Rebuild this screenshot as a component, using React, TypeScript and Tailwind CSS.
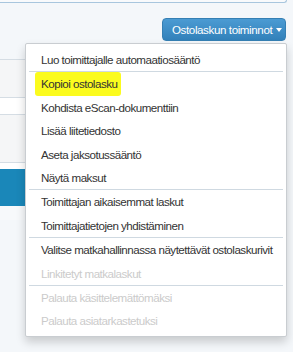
import React from "react";

type Item = { label: string; disabled?: boolean; highlight?: boolean } | "divider";

const items: Item[] = [
  { label: "Luo toimittajalle automaatiosääntö" },
  "divider",
  { label: "Kopioi ostolasku", highlight: true },
  { label: "Kohdista eScan-dokumenttiin" },
  { label: "Lisää liitetiedosto" },
  { label: "Aseta jaksotussääntö" },
  { label: "Näytä maksut" },
  "divider",
  { label: "Toimittajan aikaisemmat laskut" },
  { label: "Toimittajatietojen yhdistäminen" },
  "divider",
  { label: "Valitse matkahallinnassa näytettävät ostolaskurivit" },
  { label: "Linkitetyt matkalaskut", disabled: true },
  "divider",
  { label: "Palauta käsittelemättömäksi", disabled: true },
  { label: "Palauta asiatarkastetuksi", disabled: true },
];

export default function App() {
  return (
    <div
      className="relative w-[293px] h-[352px] overflow-hidden bg-[#f4f7fa] text-[11.6px] tracking-[-0.5px]"
      style={{ fontFamily: '"Liberation Sans", Arial, sans-serif' }}
    >
      {/* top box remnant */}
      <div className="w-[287px] h-[3px] border-b border-r border-[#a8c6de] rounded-br-[4px] bg-white/40" />

      {/* button row */}
      <div className="flex justify-end pr-[7px] pt-[15px]">
        <button className="relative flex items-center h-[23px] w-[124px] pl-[9px] rounded-[4px] border border-[#357fb3] bg-gradient-to-b from-[#4b9bd3] to-[#3281ba] text-white text-[11.6px] tracking-[-0.4px] leading-none whitespace-nowrap">
          <span>Ostolaskun toiminnot</span>
          <span className="ml-[4px] mt-[1px] w-0 h-0 border-l-[3.5px] border-r-[3.5px] border-t-[4px] border-l-transparent border-r-transparent border-t-white" />
        </button>
      </div>

      {/* table behind the menu */}
      <div className="w-[287px] mt-[2px]">
        <div className="h-[16px]" />
        <div className="h-[38px] border-t border-[#d5dde4] bg-[#f5f6f7]" />
        <div className="h-[17px] border-t border-[#d5dde4] bg-white" />
        <div className="h-[48px] border-t border-[#d5dde4] bg-[#f5f6f7]" />
        <div className="h-[7px] border-t border-[#d5dde4] bg-white" />
        <div className="h-[37px] bg-[#1a87b9]" />
        <div className="h-[14px] bg-[#f7f9fb]" />
      </div>

      {/* dropdown menu */}
      <div className="absolute left-[25px] top-[43px] w-[262px] bg-white border border-[#c9cdd1] rounded-[2px] pt-[4px] pb-[3px] shadow-[0_5px_10px_rgba(0,0,0,0.18)]">
        {items.map((it, i) =>
          it === "divider" ? (
            <div key={i} className="mx-[3px] h-px bg-[#cfd9e1]" />
          ) : (
            <div
              key={i}
              className={`h-[23.4px] flex items-center pl-[15px] whitespace-nowrap ${
                it.disabled ? "text-[#cbcbcb]" : "text-[#333333]"
              }`}
            >
              {it.highlight ? (
                <span className="-ml-[6px] pl-[6px] pr-[4px] py-[3px] bg-[#fbfb1e] rounded-[3px]">
                  {it.label}
                </span>
              ) : (
                it.label
              )}
            </div>
          )
        )}
      </div>
    </div>
  );
}
